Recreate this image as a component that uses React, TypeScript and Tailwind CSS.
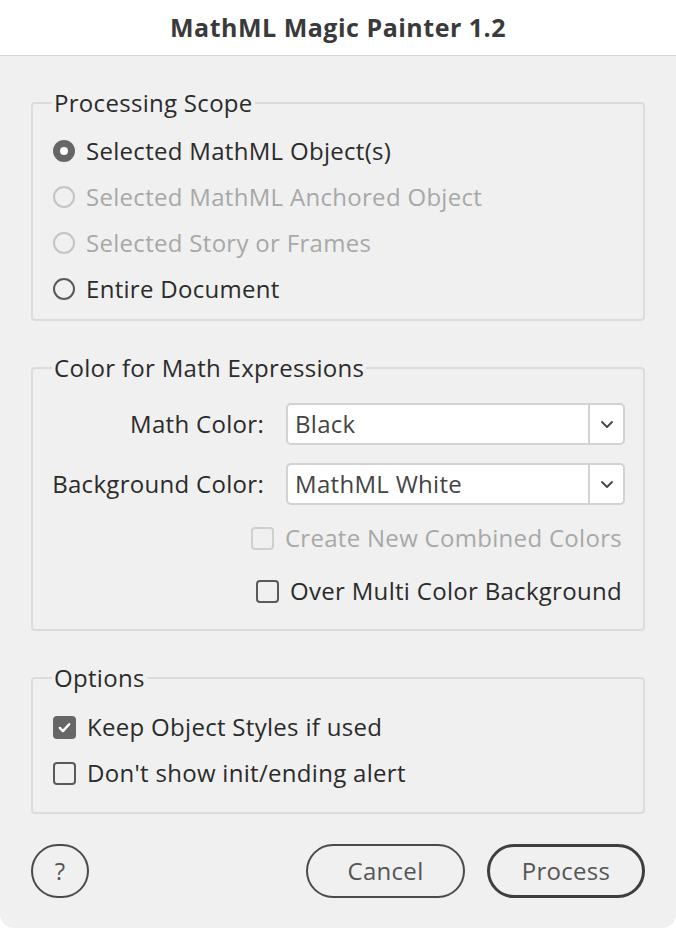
import type { ReactNode } from 'react'

const FONT = { fontFamily: '"Open Sans", "Noto Sans", sans-serif' }

function Group({ title, children, className }: { title: string; children: ReactNode; className?: string }) {
  return (
    <fieldset className={'min-w-0 border-2 border-[#dcdcdc] rounded-[4px] mx-[31px] px-[20px] ' + (className ?? '')}>
      <legend className="px-[2px] -ml-[1px] text-[24px] leading-[28px] tracking-[0.3px] text-[#2b2b2b]">{title}</legend>
      {children}
    </fieldset>
  )
}

function Radio({ label, checked, disabled }: { label: string; checked?: boolean; disabled?: boolean }) {
  return (
    <div className="flex items-center h-[46px]">
      {checked ? (
        <span className="w-[22px] h-[22px] rounded-full bg-[#666] flex items-center justify-center">
          <span className="w-[8px] h-[8px] rounded-full bg-white" />
        </span>
      ) : (
        <span
          className={
            'w-[22px] h-[22px] rounded-full border-2 ' + (disabled ? 'border-[#c4c4c4]' : 'border-[#5a5a5a]')
          }
        />
      )}
      <span
        className={
          'ml-[11px] text-[24px] leading-[30px] tracking-[0.3px] ' + (disabled ? 'text-[#a8a8a8]' : 'text-[#2b2b2b]')
        }
      >
        {label}
      </span>
    </div>
  )
}

function Check({ label, checked, disabled }: { label: string; checked?: boolean; disabled?: boolean }) {
  return (
    <div className="flex items-center h-[30px]">
      {checked ? (
        <span className="w-[23px] h-[23px] rounded-[4px] bg-[#666] flex items-center justify-center">
          <svg width="15" height="15" viewBox="0 0 16 16" fill="none">
            <path d="M3 8.5l3.3 3.3L13 4.5" stroke="white" strokeWidth="2.6" strokeLinecap="round" strokeLinejoin="round" />
          </svg>
        </span>
      ) : (
        <span
          className={
            'w-[23px] h-[23px] rounded-[4px] border-2 ' + (disabled ? 'border-[#cfcfcf]' : 'border-[#5a5a5a]')
          }
        />
      )}
      <span
        className={
          'ml-[11px] text-[24px] leading-[30px] tracking-[0.3px] whitespace-nowrap ' +
          (disabled ? 'text-[#a8a8a8]' : 'text-[#2b2b2b]')
        }
      >
        {label}
      </span>
    </div>
  )
}

function Select({ value }: { value: string }) {
  return (
    <div className="w-[339px] h-[42px] bg-white border-2 border-[#d2d2d2] rounded-[5px] flex items-stretch">
      <span className="flex-1 flex items-center pl-[7px] text-[24px] tracking-[0.3px] text-[#444]">{value}</span>
      <span className="w-[35px] border-l-2 border-[#d2d2d2] flex items-center justify-center">
        <svg width="14" height="9" viewBox="0 0 14 9" fill="none">
          <path d="M2 2l5 5 5-5" stroke="#444" strokeWidth="1.8" strokeLinecap="round" strokeLinejoin="round" />
        </svg>
      </span>
    </div>
  )
}

export default function App() {
  return (
    <div className="w-[676px] h-[928px] bg-white" style={FONT}>
      <div className="h-[56px] flex items-center justify-center border-b border-[#d6d6d6] bg-white">
        <h1 className="text-[25px] font-bold text-[#3a3a3a] tracking-[0.5px]">MathML Magic Painter 1.2</h1>
      </div>
      <div className="h-[872px] bg-[#f0f0f0] rounded-b-[14px] pt-[33px]">
        <Group title="Processing Scope" className="h-[232px] pt-[11px]">
          <Radio label="Selected MathML Object(s)" checked />
          <Radio label="Selected MathML Anchored Object" disabled />
          <Radio label="Selected Story or Frames" disabled />
          <Radio label="Entire Document" />
        </Group>

        <Group title="Color for Math Expressions" className="h-[277px] mt-[33px] pt-[21px]">
          <div className="grid grid-cols-[215px_339px] gap-x-[22px] gap-y-[18px] items-center -ml-[4px]">
            <span className="text-right whitespace-nowrap text-[24px] tracking-[0.3px] text-[#2b2b2b]">Math Color:</span>
            <Select value="Black" />
            <span className="text-right whitespace-nowrap text-[24px] tracking-[0.3px] text-[#2b2b2b]">
              Background Color:
            </span>
            <Select value="MathML White" />
          </div>
          <div className="flex flex-col items-end mt-[18px] mr-[1px] gap-[23px]">
            <Check label="Create New Combined Colors" disabled />
            <Check label="Over Multi Color Background" />
          </div>
        </Group>

        <Group title="Options" className="h-[150px] mt-[33px] pt-[20px]">
          <div className="flex flex-col gap-[16px]">
            <Check label="Keep Object Styles if used" checked />
            <Check label="Don't show init/ending alert" />
          </div>
        </Group>

        <div className="flex items-center mx-[31px] mt-[30px]">
          <button className="w-[58px] h-[54px] rounded-[27px] border-2 border-[#4a4a4a] text-[24px] text-[#555]">?</button>
          <div className="flex-1" />
          <button className="w-[159px] h-[54px] rounded-[27px] border-2 border-[#4a4a4a] text-[24px] tracking-[0.3px] text-[#555]">
            Cancel
          </button>
          <button className="ml-[22px] w-[158px] h-[54px] rounded-[27px] border-[3px] border-[#3e3e3e] text-[24px] tracking-[0.3px] text-[#555]">
            Process
          </button>
        </div>
      </div>
    </div>
  )
}
